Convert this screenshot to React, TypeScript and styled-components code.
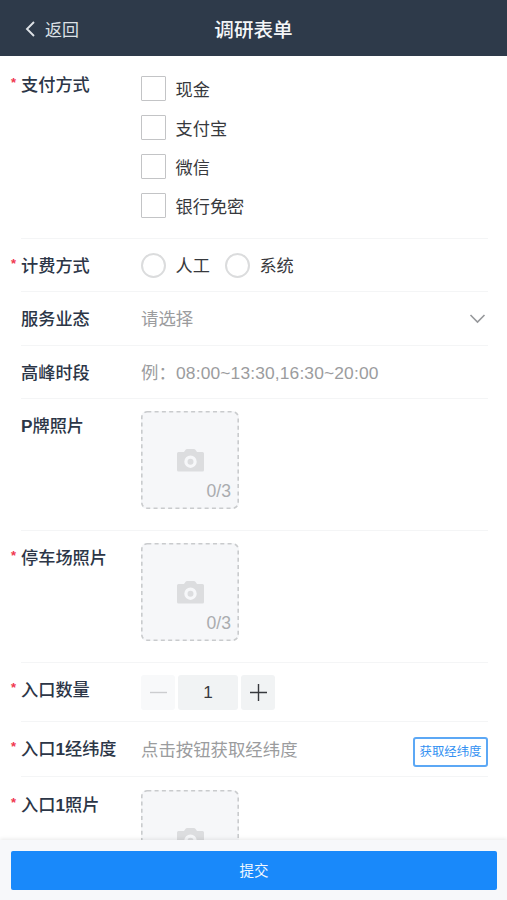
import React from 'react';
import styled, { createGlobalStyle } from 'styled-components';

const GlobalStyle = createGlobalStyle`
  * { box-sizing: border-box; }
  body {
    margin: 0;
    background: #fff;
    font-family: "Liberation Sans", "Noto Sans CJK SC", sans-serif;
    font-size: 17.2px;
    color: #37393d;
  }
  button { font-family: inherit; margin: 0; padding: 0; }
`;

const Screen = styled.div`
  display: flex;
  flex-direction: column;
  height: 900px;
  overflow: hidden;
`;

const Header = styled.header`
  display: grid;
  grid-template-columns: 1fr auto 1fr;
  align-items: center;
  flex: none;
  height: 56px;
  padding: 4px 25px 0;
  background: #2e3a4a;
  color: #f4f6f8;
`;

const Back = styled.button`
  display: flex;
  align-items: center;
  gap: 9px;
  border: 0;
  background: none;
  color: #dde1e6;
  font-size: 17px;
  line-height: 24px;
  span { padding-top: 1px; }
  svg { margin-top: -2px; }
`;

const Title = styled.h1`
  margin: 0;
  font-size: 19.6px;
  line-height: 28px;
  font-weight: 500;
`;

const Form = styled.main`
  flex: 1;
  min-height: 0;
  overflow: hidden;
`;

const Row = styled.section<{ $height: number }>`
  display: grid;
  grid-template-columns: 120px 1fr;
  height: ${(p) => p.$height}px;
  margin: 0 19px 0 21px;
  border-bottom: 1px solid #f4f5f6;
`;

const Label = styled.div<{ $top: number }>`
  display: flex;
  margin-left: -10px;
  padding-top: ${(p) => p.$top}px;
  line-height: 24px;
  font-weight: 500;
  color: #2c3647;
  white-space: nowrap;
  b { font-weight: 700; }
`;

const Star = styled.span`
  width: 10px;
  color: #f0384f;
  font-size: 13px;
  font-weight: 700;
  line-height: 20px;
`;

const Control = styled.div<{ $top: number; $gap?: number }>`
  display: flex;
  align-items: flex-start;
  gap: ${(p) => p.$gap ?? 0}px;
  padding-top: ${(p) => p.$top}px;
  line-height: 24px;
`;

const Options = styled.div`
  display: flex;
  flex-direction: column;
  gap: 14px;
  padding-top: 20px;
`;

const Option = styled.label`
  display: flex;
  align-items: center;
  gap: 9.5px;
  height: 25px;
`;

const Box = styled.span<{ $round?: boolean }>`
  width: 25px;
  height: 25px;
  border: ${(p) => (p.$round ? '2px solid #dbdcdd' : '1px solid #c3c4c6')};
  border-radius: ${(p) => (p.$round ? '50%' : '1px')};
`;

const Hint = styled.span<{ $spacing?: number }>`
  flex: 1;
  color: #9b9c9e;
  font-size: 17.4px;
  letter-spacing: ${(p) => p.$spacing ?? 0}px;
  white-space: nowrap;
`;

const Upload = styled.div<{ $top: number }>`
  position: relative;
  display: grid;
  grid-template-rows: 1fr auto;
  width: 98px;
  height: 98px;
  margin-top: ${(p) => p.$top}px;
  padding: 37px 8px 6px;
  border-radius: 6px;
  background: #f6f7f9;
  color: #aaacaf;
  font-size: 17.6px;
  span { justify-self: end; line-height: 24px; }
`;

const DashedEdge = styled.svg`
  position: absolute;
  inset: 0;
`;

const Camera = styled.svg`
  justify-self: center;
`;

const Stepper = styled.div`
  display: flex;
  gap: 3px;
  margin-top: 12px;
  height: 35px;
`;

const StepCell = styled.div<{ $wide?: boolean; $faded?: boolean }>`
  display: flex;
  align-items: center;
  justify-content: center;
  width: ${(p) => (p.$wide ? 60 : 34)}px;
  border-radius: 3px;
  background: ${(p) => (p.$faded ? '#f8f9fa' : '#f1f3f4')};
  color: ${(p) => (p.$faded ? '#cccdcf' : '#37393d')};
`;

const OutlineButton = styled.button`
  width: 75px;
  height: 30px;
  margin-top: -1px;
  padding-bottom: 2px;
  border: 2px solid #5ca8f5;
  border-radius: 3px;
  background: #fff;
  color: #3391f2;
  font-size: 12.4px;
  white-space: nowrap;
`;

const Footer = styled.footer`
  position: relative;
  flex: none;
  height: 60px;
  padding: 11px 10px 10px 11px;
  background: #f7f8fa;
  box-shadow: 0 -1px 4px rgba(0, 0, 0, 0.09);
`;

const Submit = styled.button`
  display: block;
  width: 100%;
  height: 39px;
  padding-bottom: 2px;
  border: 0;
  border-radius: 2px;
  background: #1989fa;
  color: #f2f8ff;
  font-size: 14.5px;
`;

const Field = ({ label, height, top = 15, required, children }: {
  label: React.ReactNode; height: number; top?: number; required?: boolean; children: React.ReactNode;
}) => (
  <Row $height={height}>
    <Label $top={top}><Star>{required ? '*' : ''}</Star><span>{label}</span></Label>
    {children}
  </Row>
);

const Photo = ({ count, top = 12 }: { count?: string; top?: number }) => (
  <Upload $top={top}>
    <DashedEdge width="98" height="98" fill="none" stroke="#c9cbcd" strokeWidth="1.6" strokeDasharray="4 3.300">
      <rect x="0.8" y="0.8" width="96.400" height="96.400" rx="5.500" />
    </DashedEdge>
    <Camera width="27" height="24" viewBox="0 0 27 24">
      <path fillRule="evenodd" fill="#dcdddf" d="M1.500 4H7l1.600-2.300Q9.200 1 10 1h7q.8 0 1.400.7L20 4h5.500q1.500 0 1.500 1.500v16.500q0 1.500-1.500 1.500h-24Q0 23.500 0 22v-16.500Q0 4 1.500 4ZM13.500 7.500a6.200 6.200 0 1 0 0 12.400a6.200 6.200 0 0 0 0-12.400Zm0 3.200a3 3 0 1 1 0 6a3 3 0 0 1 0-6Z" />
    </Camera>
    {count && <span>{count}</span>}
  </Upload>
);

export default function App() {
  return (
    <>
      <GlobalStyle />
      <Screen>
        <Header>
          <Back>
            <svg width="11" height="16" viewBox="0 0 11 16" fill="none" stroke="currentColor" strokeWidth="1.9">
              <path d="M9 1L2 8l7 7" />
            </svg>
            <span>返回</span>
          </Back>
          <Title>调研表单</Title>
        </Header>
        <Form>
          <Field label="支付方式" height={183} top={17} required>
            <Options>
              {['现金', '支付宝', '微信', '银行免密'].map((name) => (
                <Option key={name}><Box />{name}</Option>
              ))}
            </Options>
          </Field>
          <Field label="计费方式" height={53} required>
            <Control $top={14} $gap={15}>
              {['人工', '系统'].map((name) => (
                <Option key={name}><Box $round />{name}</Option>
              ))}
            </Control>
          </Field>
          <Field label="服务业态" height={54}>
            <Control $top={15}>
              <Hint>请选择</Hint>
              <svg width="19" height="24" viewBox="0 0 19 24" fill="none" stroke="#96989b" strokeWidth="1.6">
                <path d="M1.500 8L8.500 15L15.500 8" />
              </svg>
            </Control>
          </Field>
          <Field label="高峰时段" height={53}>
            <Control $top={15}><Hint $spacing={0.14}>例：08:00~13:30,16:30~20:00</Hint></Control>
          </Field>
          <Field label={<><b>P</b>牌照片</>} height={132}><Photo count="0/3" /></Field>
          <Field label="停车场照片" height={132} required><Photo count="0/3" /></Field>
          <Field label="入口数量" height={59} required>
            <Stepper>
              <StepCell $faded>
                <svg width="17" height="17" stroke="currentColor" strokeWidth="1.4"><path d="M0 8.500H17" /></svg>
              </StepCell>
              <StepCell $wide>1</StepCell>
              <StepCell>
                <svg width="17" height="17" stroke="currentColor" strokeWidth="1.4"><path d="M0 8.500H17M8.500 0V17" /></svg>
              </StepCell>
            </Stepper>
          </Field>
          <Field label={<>入口<b>1</b>经纬度</>} height={55} required>
            <Control $top={15.5}>
              <Hint>点击按钮获取经纬度</Hint>
              <OutlineButton>获取经纬度</OutlineButton>
            </Control>
          </Field>
          <Field label={<>入口<b>1</b>照片</>} height={132} top={16} required><Photo top={13} /></Field>
        </Form>
        <Footer><Submit>提交</Submit></Footer>
      </Screen>
    </>
  );
}
